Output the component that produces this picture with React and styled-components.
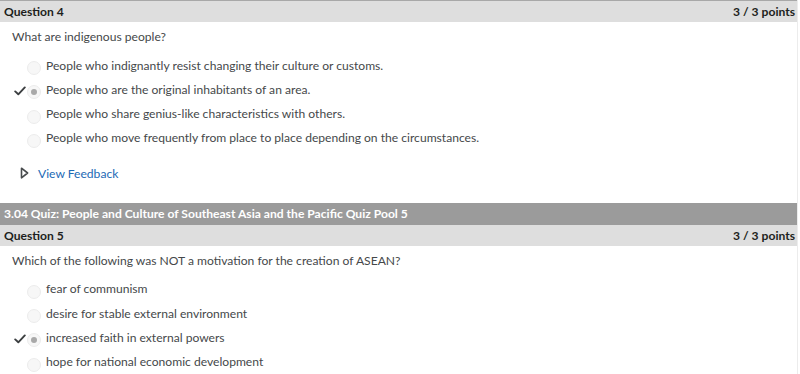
import styled, { createGlobalStyle } from "styled-components";

const GlobalStyle = createGlobalStyle`
  body {
    margin: 0;
    background: #ffffff;
    font-family: Lato, "Open Sans", sans-serif;
  }
`;

const questions = [
  {
    id: 4,
    points: "3 / 3 points",
    text: "What are indigenous people?",
    answers: [
      "People who indignantly resist changing their culture or customs.",
      "People who are the original inhabitants of an area.",
      "People who share genius-like characteristics with others.",
      "People who move frequently from place to place depending on the circumstances.",
    ],
    correct: 1,
    feedback: true,
  },
  {
    id: 5,
    section: "3.04 Quiz: People and Culture of Southeast Asia and the Pacific Quiz Pool 5",
    points: "3 / 3 points",
    text: "Which of the following was NOT a motivation for the creation of ASEAN?",
    answers: [
      "fear of communism",
      "desire for stable external environment",
      "increased faith in external powers",
      "hope for national economic development",
    ],
    correct: 2,
  },
];

function Check() {
  return (
    <svg width="12" height="10" viewBox="0 0 12 10">
      <path
        d="M1.2 5.4 L4.3 8.3 L10.8 1.4"
        fill="none"
        stroke="#3c3f41"
        strokeWidth="1.9"
        strokeLinecap="round"
        strokeLinejoin="round"
      />
    </svg>
  );
}

function App() {
  return (
    <Page>
      <GlobalStyle />
      {questions.map((q) => (
        <div key={q.id}>
          {q.section && <SectionBar>{q.section}</SectionBar>}
          <QuestionHeader top={!q.section}>
            <span>Question {q.id}</span>
            <span>{q.points}</span>
          </QuestionHeader>
          <Body>
            <Prompt>{q.text}</Prompt>
            <Answers>
              {q.answers.map((a, i) => (
                <AnswerRow key={a}>
                  <Mark>{i === q.correct && <Check />}</Mark>
                  <Radio selected={i === q.correct} />
                  <AnswerText>{a}</AnswerText>
                </AnswerRow>
              ))}
            </Answers>
            {q.feedback && (
              <Feedback>
                <svg width="9" height="12" viewBox="0 0 9 12">
                  <path
                    d="M1.5 1.2 L7.6 6 L1.5 10.8 Z"
                    fill="none"
                    stroke="#494c4e"
                    strokeWidth="1.6"
                    strokeLinejoin="round"
                  />
                </svg>
                <FeedbackLink>View Feedback</FeedbackLink>
              </Feedback>
            )}
          </Body>
        </div>
      ))}
    </Page>
  );
}

export default App;

const Page = styled.div`
  width: 797px;
  border-right: 1px solid #ececec;
  min-height: 374px;
`;

const SectionBar = styled.div`
  background: #9b9b9b;
  color: #ffffff;
  font-weight: 700;
  font-size: 12.1px;
  height: 22px;
  line-height: 22px;
  padding: 0 4px;
  white-space: nowrap;
`;

const QuestionHeader = styled.div`
  display: flex;
  justify-content: space-between;
  align-items: center;
  background: #dedede;
  border-top: ${(p) => (p.top ? "1px solid #a8a8a8" : "none")};
  color: #1d1f20;
  font-weight: 700;
  font-size: 12.1px;
  height: 21px;
  padding: 0 2px 0 4px;
`;

const Body = styled.div`
  padding: 6px 0 0 12px;
`;

const Prompt = styled.div`
  color: #45484a;
  font-size: 12.1px;
  line-height: 18px;
  margin-bottom: 10px;
`;

const Answers = styled.div`
  display: flex;
  flex-direction: column;
  gap: 6.3px;
`;

const AnswerRow = styled.div`
  display: flex;
  align-items: center;
  height: 18px;
`;

const Mark = styled.div`
  width: 13px;
  display: flex;
  padding: 4px 0 0 2px;
`;

const Radio = styled.div`
  width: 14px;
  height: 14px;
  border-radius: 50%;
  background: #f7f7f7;
  border: 1px solid #ececec;
  box-sizing: border-box;
  margin-top: 6px;
  display: flex;
  align-items: center;
  justify-content: center;

  &::after {
    content: "";
    width: 6px;
    height: 6px;
    border-radius: 50%;
    background: ${(p) => (p.selected ? "#a9a9a9" : "transparent")};
  }
`;

const AnswerText = styled.span`
  color: #45484a;
  font-size: 12.1px;
  margin-left: 5px;
  white-space: nowrap;
`;

const Feedback = styled.div`
  display: flex;
  align-items: center;
  gap: 9px;
  padding: 19px 0 22px 8px;
`;

const FeedbackLink = styled.span`
  color: #1c6ab5;
  font-size: 12.1px;
`;
